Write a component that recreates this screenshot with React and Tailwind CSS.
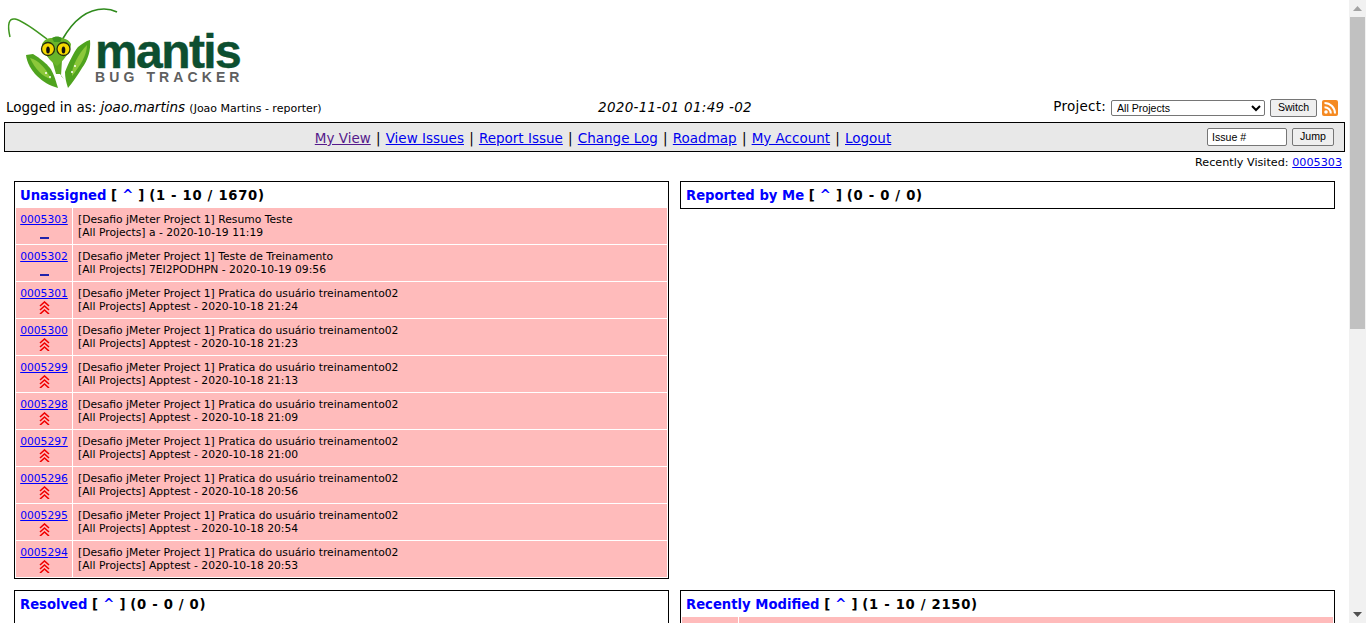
import React from "react";

const rows = [
  ["0005303", "Resumo Teste", "a - 2020-10-19 11:19", "low"],
  ["0005302", "Teste de Treinamento", "7EI2PODHPN - 2020-10-19 09:56", "low"],
  ["0005301", "Pratica do usuário treinamento02", "Apptest - 2020-10-18 21:24", "high"],
  ["0005300", "Pratica do usuário treinamento02", "Apptest - 2020-10-18 21:23", "high"],
  ["0005299", "Pratica do usuário treinamento02", "Apptest - 2020-10-18 21:13", "high"],
  ["0005298", "Pratica do usuário treinamento02", "Apptest - 2020-10-18 21:09", "high"],
  ["0005297", "Pratica do usuário treinamento02", "Apptest - 2020-10-18 21:00", "high"],
  ["0005296", "Pratica do usuário treinamento02", "Apptest - 2020-10-18 20:56", "high"],
  ["0005295", "Pratica do usuário treinamento02", "Apptest - 2020-10-18 20:54", "high"],
  ["0005294", "Pratica do usuário treinamento02", "Apptest - 2020-10-18 20:53", "high"],
];

const navLinks = ["My View", "View Issues", "Report Issue", "Change Log", "Roadmap", "My Account", "Logout"];

const Logo = () => (
  <div className="flex items-start h-[94px]">
    <svg width="120" height="94" viewBox="0 0 120 94" className="shrink-0">
      {/* antennae */}
      <path d="M47 39 C36 31 24 21 15 19 C9 18 7 24 10 37" fill="none" stroke="#3f961f" strokeWidth="1.5" />
      <path d="M62 40 C70 26 84 9 104 9 C109 9 113 10 117 12" fill="none" stroke="#2f8a1c" strokeWidth="1.7" />
      {/* left leaf */}
      <path d="M26 55 L33 54 C40 58 46 63 50 68 C53 72 55 78 58 88 C50 86 42 81 37 76 C31 70 27 63 26 55 Z" fill="#4fa31e" />
      <path d="M30 58 C38 60 46 68 51 79 C43 77 35 69 30 58 Z" fill="#8cc83a" />
      {/* right leaf */}
      <path d="M90 40 C91 50 88 60 82 68 C77 76 73 82 68 88 C66 82 65 77 65 72 C69 62 74 52 78 47 C82 44 86 41 90 40 Z" fill="#4fa31e" />
      <path d="M87 45 C87 55 80 66 72 76 C71 68 78 54 87 45 Z" fill="#8cc83a" />
      {/* body */}
      <path d="M52 60 L62 60 L61 76 L64 79 L60 74 L56 74 Z" fill="#5aa823" />
      {/* head */}
      <path d="M42 44 C46 37 50 38 56 38 C62 38 68 38 71 44 C71 52 62 62 57 66 C51 62 42 52 42 44 Z" fill="#69b52a" />
      <path d="M52 38 C55 36 59 36 62 38 L60 42 L54 42 Z" fill="#3f961f" />
      <ellipse cx="48" cy="49" rx="6.5" ry="6.5" fill="#f5d800" stroke="#24300c" strokeWidth="1.3" />
      <ellipse cx="63.5" cy="49" rx="6.5" ry="6.5" fill="#f5d800" stroke="#24300c" strokeWidth="1.3" />
      <ellipse cx="48" cy="50" rx="1.8" ry="3.6" fill="#111" />
      <ellipse cx="63.5" cy="50" rx="1.8" ry="3.6" fill="#111" />
      {/* spots on the forelegs */}
      <circle cx="46" cy="73" r="1" fill="#fff" />
      <circle cx="50" cy="77" r="1" fill="#fff" />
      <circle cx="75" cy="66" r="1" fill="#fff" />
      <circle cx="72" cy="72" r="1" fill="#fff" />
    </svg>
    <div className="ml-[-25px] mt-[32px] flex flex-col">
      <span className="font-['Liberation_Sans',sans-serif] font-bold text-[48px] leading-[39px] tracking-[-1.6px] text-[#0d4f30] [-webkit-text-stroke:0.4px_#0d4f30]">mantis</span>
      <span className="font-['Liberation_Sans',sans-serif] font-bold text-[14px] leading-[12px] tracking-[4.1px] text-[#5f5f5f] whitespace-nowrap">BUG TRACKER</span>
    </div>
  </div>
);

const Priority = ({ level }) =>
  level === "low" ? (
    <span className="mx-auto mt-[10px] block w-[9px] h-[2px] bg-[#2222aa]" />
  ) : (
    <svg width="11" height="13" viewBox="0 0 11 13" className="mx-auto block" fill="none" stroke="#f00000" strokeWidth="1.6">
      <path d="M1 5 L5.5 1 L10 5" />
      <path d="M1 9 L5.5 5 L10 9" />
      <path d="M1 13 L5.5 9 L10 13" />
    </svg>
  );

const Box = ({ title, range, children }) => (
  <div className="border border-black">
    <div className="h-[26px] pl-[5px] pt-[6px] text-[13.2px] leading-[16px] font-bold whitespace-nowrap">
      <span className="text-[#0000ff]">{title}</span>{" "}
      <span className="tracking-[0.25px]">[ <span className="text-[#0000ff]">^</span> ]</span>{" "}
      <span className="tracking-[0.7px]">({range})</span>
    </div>
    {children}
  </div>
);

const IssueRow = ({ id, summary, detail, level }) => (
  <div className="flex h-[37px] bg-[#ffbbbb] border-b border-white last:border-b-0 last:h-[36px]">
    <div className="w-[57px] shrink-0 text-center border-r border-white pt-[5px]">
      <a href="#" className="block text-[10.7px] leading-[14px] text-[#0000ff] underline">{id}</a>
      <Priority level={level} />
    </div>
    <div className="pl-[5px] pt-[5px] text-[10.75px] leading-[13px] text-black whitespace-nowrap">
      <div>[Desafio jMeter Project 1] {summary}</div>
      <div>[All Projects] {detail}</div>
    </div>
  </div>
);

export default function App() {
  return (
    <div className="flex h-[623px] overflow-hidden bg-white font-['DejaVu_Sans',sans-serif] text-black">
      <div className="w-[1349px] shrink-0">
        <Logo />

        <div className="flex items-center h-[28px] pl-[6px] pr-[11px] pb-[2px] text-[13.5px]">
          <div className="w-[592px] whitespace-nowrap">
            Logged in as: <em>joao.martins</em> <span className="text-[11px]">(Joao Martins - reporter)</span>
          </div>
          <em className="whitespace-nowrap tracking-[0.3px]">2020-11-01 01:49 -02</em>
          <div className="ml-auto flex items-center whitespace-nowrap">
            <span className="mt-[-1px] tracking-[0.25px]">Project:</span>
            <select className="ml-[5px] mt-[2px] w-[154px] h-[16px] border border-[#767676] rounded-[2px] bg-white text-[10.6px] font-['Liberation_Sans',sans-serif] pl-[1px]">
              <option>All Projects</option>
            </select>
            <button className="ml-[5px] mt-[2px] w-[47px] h-[18px] border border-[#767676] rounded-[2px] bg-[#efefef] text-[10.6px] font-['Liberation_Sans',sans-serif]">Switch</button>
            <svg width="16" height="16" viewBox="0 0 16 16" className="ml-[5px] mt-[2px]">
              <rect width="16" height="16" rx="2" fill="#f58a22" />
              <circle cx="4" cy="12" r="1.8" fill="#fff" />
              <path d="M2.5 7.2 A6.3 6.3 0 0 1 8.8 13.5" fill="none" stroke="#fff" strokeWidth="2" />
              <path d="M2.5 3 A10.5 10.5 0 0 1 13 13.5" fill="none" stroke="#fff" strokeWidth="2" />
            </svg>
          </div>
        </div>

        <div className="relative mx-[4px] h-[30px] w-[1341px] border border-black bg-[#e8e8e8] flex items-center justify-center text-[13.5px] text-[#000]">
          <div className="flex gap-[5.2px] mr-[143px] mt-[2px]">
            {navLinks.map((link, i) => (
              <React.Fragment key={link}>
                {i > 0 && <span>|</span>}
                <a href="#" className={i === 0 ? "text-[#551a8b] underline" : "text-[#0000ee] underline"}>{link}</a>
              </React.Fragment>
            ))}
          </div>
          <div className="absolute right-[10px] top-[5px] flex gap-[5px]">
            <input readOnly value="Issue #" className="w-[80px] h-[18px] border border-[#767676] rounded-[2px] bg-white pl-[4px] text-[10.6px] font-['Liberation_Sans',sans-serif]" />
            <button className="w-[42px] h-[18px] border border-[#767676] rounded-[2px] bg-[#efefef] text-[10.6px] font-['Liberation_Sans',sans-serif]">Jump</button>
          </div>
        </div>

        <div className="h-[29px] pr-[7px] pt-[4px] text-right text-[11.2px] leading-[14px]">
          Recently Visited: <a href="#" className="text-[#0000ee] underline">0005303</a>
        </div>

        <div className="grid grid-cols-[655px_655px] gap-x-[11px] gap-y-[11px] pl-[14px]">
          <Box title="Unassigned" range="1 - 10 / 1670">
            <div className="px-px pb-px">
              {rows.map((r) => (
                <IssueRow key={r[0]} id={r[0]} summary={r[1]} detail={r[2]} level={r[3]} />
              ))}
            </div>
          </Box>
          <div className="self-start">
            <Box title="Reported by Me" range="0 - 0 / 0" />
          </div>
          <Box title="Resolved" range="0 - 0 / 0" />
          <Box title="Recently Modified" range="1 - 10 / 2150">
            <div className="px-px">
              <div className="flex h-[37px] bg-[#ffbbbb]">
                <div className="w-[57px] border-r border-white" />
              </div>
            </div>
          </Box>
        </div>
      </div>

      <div className="w-[17px] shrink-0 h-full bg-[#f1f1f1] flex flex-col items-center">
        <svg width="9" height="5" viewBox="0 0 9 5" className="mt-[6px]"><path d="M4.5 0 L9 5 H0 Z" fill="#a3a3a3" /></svg>
        <div className="w-[15px] h-[312px] mt-[6px] bg-[#c1c1c1]" />
        <svg width="9" height="5" viewBox="0 0 9 5" className="mt-auto mb-[6px]"><path d="M0 0 H9 L4.5 5 Z" fill="#505050" /></svg>
      </div>
    </div>
  );
}
